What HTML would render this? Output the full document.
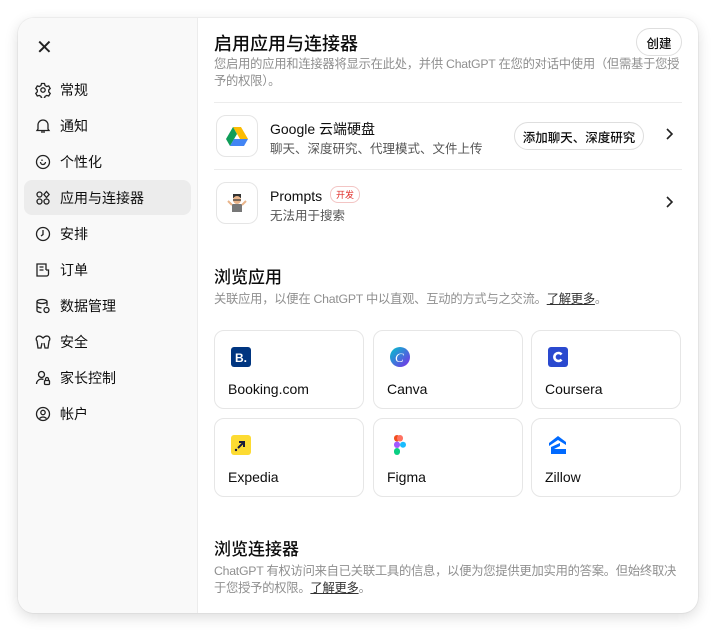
<!DOCTYPE html>
<html><head><meta charset="utf-8"><style>
*{box-sizing:border-box;margin:0;padding:0}
body{width:717px;height:632px;background:#fff;font-family:"Liberation Sans","Noto Sans CJK SC",sans-serif;color:#0d0d0d;position:relative;overflow:hidden}
.win{position:absolute;left:18px;top:18px;width:680px;height:595px;border-radius:16px;background:#fff;box-shadow:0 4px 14px rgba(0,0,0,.14),0 0 0 1px rgba(0,0,0,.04);overflow:hidden}
.side{position:absolute;left:0;top:0;width:180px;height:100%;background:#f9f9f9;border-right:1px solid #ececec}
.x{position:absolute;left:18px;top:17px;font-size:20px;color:#222}
.it{position:absolute;left:6px;width:167px;height:35px;border-radius:8px;display:flex;align-items:center;font-size:14px}
.it.sel{background:#ececec}
.it svg{position:absolute;left:11px;width:16px;height:16px}
.it span{position:absolute;left:36px}
.main{position:absolute;left:196px;top:0;right:0;bottom:0}
h1{font-size:18px;font-weight:500;position:absolute;left:0;top:12px}
h2{font-size:17px;font-weight:500;position:absolute;left:0}
.desc{font-size:12.3px;color:#8f8f8f;line-height:17px;position:absolute;left:0;width:472px;letter-spacing:-0.25px}
.btn{position:absolute;border:1px solid #dedede;border-radius:14px;font-size:12.5px;font-weight:500;display:flex;align-items:center;justify-content:center;background:#fff}
.sep{position:absolute;left:0;width:468px;height:1px;background:#ececec}
.ibox{position:absolute;left:2px;width:42px;height:42px;border:1px solid #e5e5e5;border-radius:10px;display:flex;align-items:center;justify-content:center;background:#fff}
.nm{position:absolute;left:56px;font-size:14px}
.sb{position:absolute;left:56px;font-size:12.5px;color:#555}
.chev{position:absolute;left:450px;width:10px;height:16px}
.card{position:absolute;width:150px;height:79px;border:1px solid #e6e6e6;border-radius:10px}
.card .lg{position:absolute;left:16px;top:16px;width:20px;height:20px}
.card .lb{position:absolute;left:13px;top:50px;font-size:14px}
</style></head><body>
<div class="win">
<div class="side">
<div class="x">✕</div>
<div class="it" style="top:54px"><svg viewBox="0 0 16 16" fill="none" stroke="#222" stroke-width="1.3"><path d="M6.5 1.5h3l.5 2 1.7 1 2-.6 1.5 2.6-1.5 1.5v1.9l1.5 1.5-1.5 2.6-2-.6-1.7 1-.5 2h-3l-.5-2-1.7-1-2 .6L.8 11.4l1.5-1.5V8L.8 6.5l1.5-2.6 2 .6L6 3.5z"/><circle cx="8" cy="8" r="2.2"/></svg><span>常规</span></div>
<div class="it" style="top:90px"><svg viewBox="0 0 16 16" fill="none" stroke="#222" stroke-width="1.3"><path d="M3 11V7a5 5 0 0110 0v4l1 1.5H2z"/><path d="M6 14h4"/></svg><span>通知</span></div>
<div class="it" style="top:126px"><svg viewBox="0 0 16 16" fill="none" stroke="#222" stroke-width="1.3"><circle cx="8" cy="8" r="6.5"/><path d="M5.5 8a2.5 2.5 0 005 0M7 5.5v1.5"/></svg><span>个性化</span></div>
<div class="it sel" style="top:162px"><svg viewBox="0 0 16 16" fill="none" stroke="#222" stroke-width="1.3"><circle cx="4.5" cy="4.5" r="2.5"/><circle cx="11.5" cy="11.5" r="2.5"/><circle cx="4.5" cy="11.5" r="2.5"/><path d="M11.5 1.5l2.6 3-2.6 3-2.6-3z"/></svg><span>应用与连接器</span></div>
<div class="it" style="top:198px"><svg viewBox="0 0 16 16" fill="none" stroke="#222" stroke-width="1.3"><circle cx="8" cy="8" r="6.5"/><path d="M8 4v4.5L6 10"/></svg><span>安排</span></div>
<div class="it" style="top:234px"><svg viewBox="0 0 16 16" fill="none" stroke="#222" stroke-width="1.3"><path d="M11 8V2H2v12h8"/><path d="M4.5 5h4M4.5 8h4M11 8h2.5v4a2 2 0 01-2 2h-1.5"/></svg><span>订单</span></div>
<div class="it" style="top:270px"><svg viewBox="0 0 16 16" fill="none" stroke="#222" stroke-width="1.3"><ellipse cx="7" cy="3.5" rx="5" ry="2"/><path d="M2 3.5v9c0 1 2 2 4.5 2M12 3.5V8M2 8c0 1 2 2 4.5 2"/><circle cx="11.5" cy="12" r="2.5"/></svg><span>数据管理</span></div>
<div class="it" style="top:306px"><svg viewBox="0 0 16 16" fill="none" stroke="#222" stroke-width="1.3"><path d="M4 2a3 3 0 00-2 5l1 7h3l1-5M12 2a3 3 0 012 5l-1 7h-3l-1-5M4 2c2 0 3 1 4 2 1-1 2-2 4-2"/></svg><span>安全</span></div>
<div class="it" style="top:342px"><svg viewBox="0 0 16 16" fill="none" stroke="#222" stroke-width="1.3"><circle cx="6.5" cy="4.5" r="3"/><path d="M1.5 14a5 5 0 017-4.5"/><rect x="9.5" y="10.5" width="5" height="4" rx="1"/><path d="M10.5 10.5V9a1.5 1.5 0 013 0v1.5"/></svg><span>家长控制</span></div>
<div class="it" style="top:378px"><svg viewBox="0 0 16 16" fill="none" stroke="#222" stroke-width="1.3"><circle cx="8" cy="8" r="6.5"/><circle cx="8" cy="6.5" r="2.2"/><path d="M4.5 12.5c2-2 5-2 7 0"/></svg><span>帐户</span></div>
</div>
<div class="main">
<h1>启用应用与连接器</h1>
<div class="btn" style="left:422px;top:10px;width:46px;height:28px">创建</div>
<div class="desc" style="top:38px">您启用的应用和连接器将显示在此处，并供 ChatGPT 在您的对话中使用（但需基于您授予的权限）。</div>
<div class="sep" style="top:84px"></div>
<div class="ibox" style="top:97px"><svg width="22" height="20" viewBox="0 0 22 20"><path d="M7 1h8l7 12h-8z" fill="#fbbc04"/><path d="M7 1L0 13l4 7 7-12z" fill="#0f9d58"/><path d="M4 20h14l4-7H8z" fill="#4285f4"/></svg></div>
<div class="nm" style="top:101px">Google 云端硬盘</div>
<div class="sb" style="top:120px">聊天、深度研究、代理模式、文件上传</div>
<div class="btn" style="left:300px;top:104px;width:130px;height:28px">添加聊天、深度研究</div>
<svg class="chev" style="top:108px" viewBox="0 0 10 16" fill="none" stroke="#222" stroke-width="1.6"><path d="M3 3l5 5-5 5"/></svg>
<div class="sep" style="top:151px"></div>
<div class="ibox" style="top:164px"><svg width="20" height="22" viewBox="0 0 20 22"><rect x="6" y="2" width="8" height="4" fill="#333"/><circle cx="10" cy="8" r="4" fill="#e9b48a"/><rect x="6" y="7" width="8" height="2" fill="#333" opacity=".6"/><rect x="5" y="12" width="10" height="8" fill="#777"/><path d="M1 9l4 4M19 9l-4 4" stroke="#e9b48a" stroke-width="2"/></svg></div>
<div class="nm" style="top:168px">Prompts <span style="display:inline-block;font-size:9px;color:#e02e2a;border:1px solid #f3c5c4;border-radius:8px;padding:1px 5px;vertical-align:3px;margin-left:4px">开发</span></div>
<div class="sb" style="top:187px">无法用于搜索</div>
<svg class="chev" style="top:176px" viewBox="0 0 10 16" fill="none" stroke="#222" stroke-width="1.6"><path d="M3 3l5 5-5 5"/></svg>
<h2 style="top:245px">浏览应用</h2>
<div class="desc" style="top:273px">关联应用，以便在 ChatGPT 中以直观、互动的方式与之交流。<span style="color:#333;text-decoration:underline">了解更多</span>。</div>
<div class="card" style="left:0;top:312px"><svg class="lg" viewBox="0 0 20 20"><rect width="20" height="20" rx="3" fill="#003580"/><text x="4" y="15" font-size="12" font-weight="700" fill="#fff" font-family="Liberation Sans">B.</text></svg><div class="lb">Booking.com</div></div>
<div class="card" style="left:159px;top:312px"><svg class="lg" viewBox="0 0 20 20"><defs><linearGradient id="cg" x1="0" y1="0" x2="1" y2="1"><stop offset="0" stop-color="#00c4cc"/><stop offset="1" stop-color="#7d2ae8"/></linearGradient></defs><circle cx="10" cy="10" r="10" fill="url(#cg)"/><text x="5" y="15" font-size="13" font-style="italic" fill="#fff" font-family="Liberation Serif">C</text></svg><div class="lb">Canva</div></div>
<div class="card" style="left:317px;top:312px"><svg class="lg" viewBox="0 0 20 20"><rect width="20" height="20" rx="3" fill="#2a49cf"/><path d="M13.5 7.5a4 4 0 100 5" fill="none" stroke="#fff" stroke-width="2.6"/></svg><div class="lb">Coursera</div></div>
<div class="card" style="left:0;top:400px"><svg class="lg" viewBox="0 0 20 20"><rect width="20" height="20" rx="3" fill="#fddb32"/><path d="M7 13l6-6M8 7h5v5" fill="none" stroke="#1b1b3a" stroke-width="2"/><circle cx="5" cy="15" r="1.2" fill="#1b1b3a"/></svg><div class="lb">Expedia</div></div>
<div class="card" style="left:159px;top:400px"><svg class="lg" viewBox="0 0 20 20"><rect x="4" y="0" width="6" height="6.5" rx="3" fill="#f24e1e"/><rect x="7" y="0" width="6" height="6.5" rx="3" fill="#ff7262"/><rect x="4" y="6.5" width="6" height="6.5" rx="3" fill="#a259ff"/><circle cx="13" cy="9.75" r="3" fill="#1abcfe"/><rect x="4" y="13" width="6" height="7" rx="3" fill="#0acf83"/></svg><div class="lb">Figma</div></div>
<div class="card" style="left:317px;top:400px"><svg class="lg" viewBox="0 0 20 20"><path d="M10 1L1 8v3l9-6 8 5V7z" fill="#006aff"/><path d="M3 12l9-4v3l-6 3h12v5H3z" fill="#006aff"/></svg><div class="lb">Zillow</div></div>
<h2 style="top:517px">浏览连接器</h2>
<div class="desc" style="top:545px">ChatGPT 有权访问来自已关联工具的信息，以便为您提供更加实用的答案。但始终取决于您授予的权限。<span style="color:#333;text-decoration:underline">了解更多</span>。</div>
</div>
</div>
</body></html>
